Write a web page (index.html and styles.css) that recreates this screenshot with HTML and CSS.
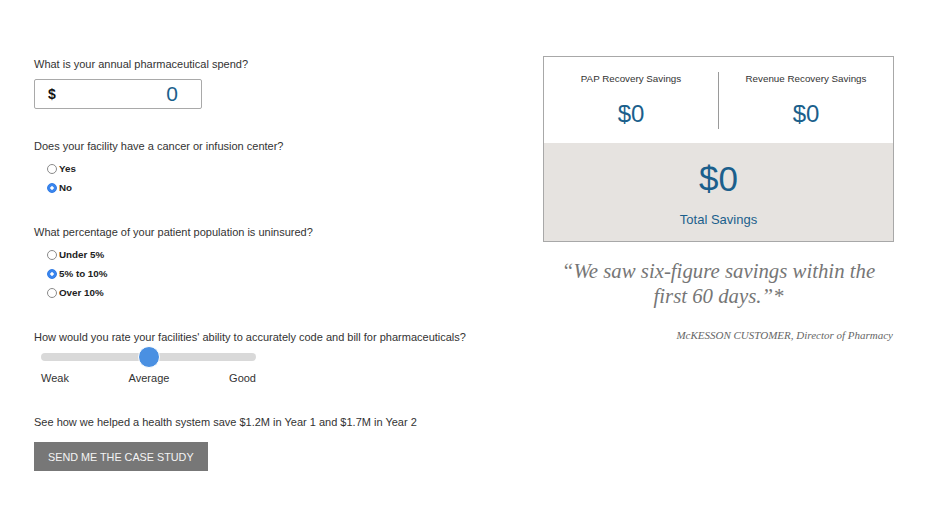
FILE: index.html
```html
<!DOCTYPE html>
<html lang="en">
<head>
<meta charset="utf-8">
<title>Savings Calculator</title>
<link rel="stylesheet" href="styles.css">
</head>
<body>
<div class="page">
  <form class="form">
    <p class="q">What is your annual pharmaceutical spend?</p>
    <div class="money">
      <span class="money-sign">$</span>
      <span class="money-value">0</span>
    </div>

    <p class="q q-gap">Does your facility have a cancer or infusion center?</p>
    <div class="options">
      <label class="opt"><input type="radio" name="cancer"><span>Yes</span></label>
      <label class="opt"><input type="radio" name="cancer" checked><span>No</span></label>
    </div>

    <p class="q q-gap2">What percentage of your patient population is uninsured?</p>
    <div class="options">
      <label class="opt"><input type="radio" name="unins"><span>Under 5%</span></label>
      <label class="opt"><input type="radio" name="unins" checked><span>5% to 10%</span></label>
      <label class="opt"><input type="radio" name="unins"><span>Over 10%</span></label>
    </div>

    <p class="q q-gap2">How would you rate your facilities' ability to accurately code and bill for pharmaceuticals?</p>
    <input class="range" type="range" min="0" max="100" value="50">
    <div class="range-labels">
      <span>Weak</span><span>Average</span><span>Good</span>
    </div>

    <p class="q q-gap3">See how we helped a health system save $1.2M in Year 1 and $1.7M in Year 2</p>
    <button type="button" class="btn">SEND ME THE CASE STUDY</button>
  </form>

  <aside class="results">
    <div class="card">
      <div class="card-top">
        <div class="stat">
          <div class="stat-label">PAP Recovery Savings</div>
          <div class="stat-value">$0</div>
        </div>
        <div class="divider"></div>
        <div class="stat">
          <div class="stat-label">Revenue Recovery Savings</div>
          <div class="stat-value">$0</div>
        </div>
      </div>
      <div class="card-total">
        <div class="total-value">$0</div>
        <div class="total-label">Total Savings</div>
      </div>
    </div>
    <blockquote class="quote">“We saw six-figure savings within the first 60 days.”*</blockquote>
    <p class="attrib">McKESSON CUSTOMER, Director of Pharmacy</p>
  </aside>
</div>
</body>
</html>
```

FILE: styles.css
```css
* { box-sizing: border-box; }
html, body { margin: 0; padding: 0; background: #fff; }
body {
  font-family: "Liberation Sans", Arial, Helvetica, sans-serif;
  color: #333;
}
.page {
  display: flex;
  padding: 56px 39px 0 34px;
}
.form {
  flex: 1;
  margin: 0;
  padding-top: 1px;
}
.q {
  margin: 0;
  font-size: 11px;
  line-height: 14px;
  color: #333;
}
.q-gap { margin-top: 30px; }
.q-gap2 { margin-top: 28px; }
.q-gap3 { margin-top: 30px; }

.money {
  margin-top: 8px;
  width: 168px;
  height: 30px;
  border: 1px solid #a9a9a9;
  border-radius: 2px;
  display: flex;
  align-items: center;
  justify-content: space-between;
  padding: 0 23px 0 13px;
}
.money-sign {
  font-weight: bold;
  font-size: 14px;
  color: #111;
}
.money-value {
  font-size: 21px;
  color: #1b5f8c;
}

.options {
  margin-top: 6px;
  padding-left: 13px;
  display: flex;
  flex-direction: column;
}
.opt {
  height: 19px;
  display: flex;
  align-items: center;
  gap: 2px;
  font-weight: bold;
  font-size: 9.8px;
  color: #222;
}
.opt input {
  appearance: none;
  -webkit-appearance: none;
  margin: 0;
  width: 10px;
  height: 10px;
  border: 1px solid #8a8a8a;
  border-radius: 50%;
  background: #fff;
}
.opt input:checked {
  border-color: #2f7be5;
  background: radial-gradient(circle, #fff 0 1.4px, #3b86ee 2px);
}

.range {
  appearance: none;
  -webkit-appearance: none;
  display: block;
  margin: 9px 0 0 7px;
  width: 215px;
  height: 8px;
  border-radius: 4px;
  background: #d9d9d9;
  outline: none;
}
.range::-webkit-slider-thumb {
  -webkit-appearance: none;
  appearance: none;
  width: 22px;
  height: 22px;
  border-radius: 50%;
  background: #4a90e2;
  border: 1px solid #fff;
  cursor: pointer;
}
.range-labels {
  margin: 10px 0 0 7px;
  width: 215px;
  display: flex;
  justify-content: space-between;
  font-size: 11px;
  line-height: 14px;
  color: #333;
}

.btn {
  margin-top: 13px;
  display: block;
  height: 29px;
  padding: 0 14px;
  border: 0;
  background: #777;
  color: #f4f4f4;
  font-family: "Liberation Sans", Arial, sans-serif;
  font-size: 10.8px;
  letter-spacing: 0;
}

.results {
  width: 351px;
}
.card {
  border: 1px solid #a8a8a8;
}
.card-top {
  display: flex;
  height: 86px;
  background: #fff;
}
.stat {
  flex: 1;
  text-align: center;
  padding-top: 15px;
}
.stat-label {
  font-size: 9.8px;
  line-height: 13px;
  color: #333;
}
.stat-value {
  margin-top: 15px;
  font-size: 24px;
  line-height: 28px;
  color: #1b5f8c;
}
.divider {
  width: 1px;
  height: 57px;
  align-self: center;
  background: #9a9a9a;
}
.card-total {
  background: #e6e3e0;
  text-align: center;
  padding: 16px 0 13px;
  height: 98px;
}
.total-value {
  font-size: 35px;
  line-height: 40px;
  color: #1b5f8c;
}
.total-label {
  margin-top: 13px;
  font-size: 13px;
  line-height: 15px;
  color: #1b5f8c;
}
.quote {
  margin: 16px 0 0;
  text-align: center;
  font-family: "Liberation Serif", "Times New Roman", serif;
  font-style: italic;
  font-size: 20.8px;
  line-height: 25px;
  color: #767676;
  padding: 0 10px;
}
.attrib {
  margin: 21px 1px 0 0;
  text-align: right;
  font-family: "Liberation Serif", "Times New Roman", serif;
  font-style: italic;
  font-size: 11px;
  line-height: 13px;
  color: #666;
}
```
